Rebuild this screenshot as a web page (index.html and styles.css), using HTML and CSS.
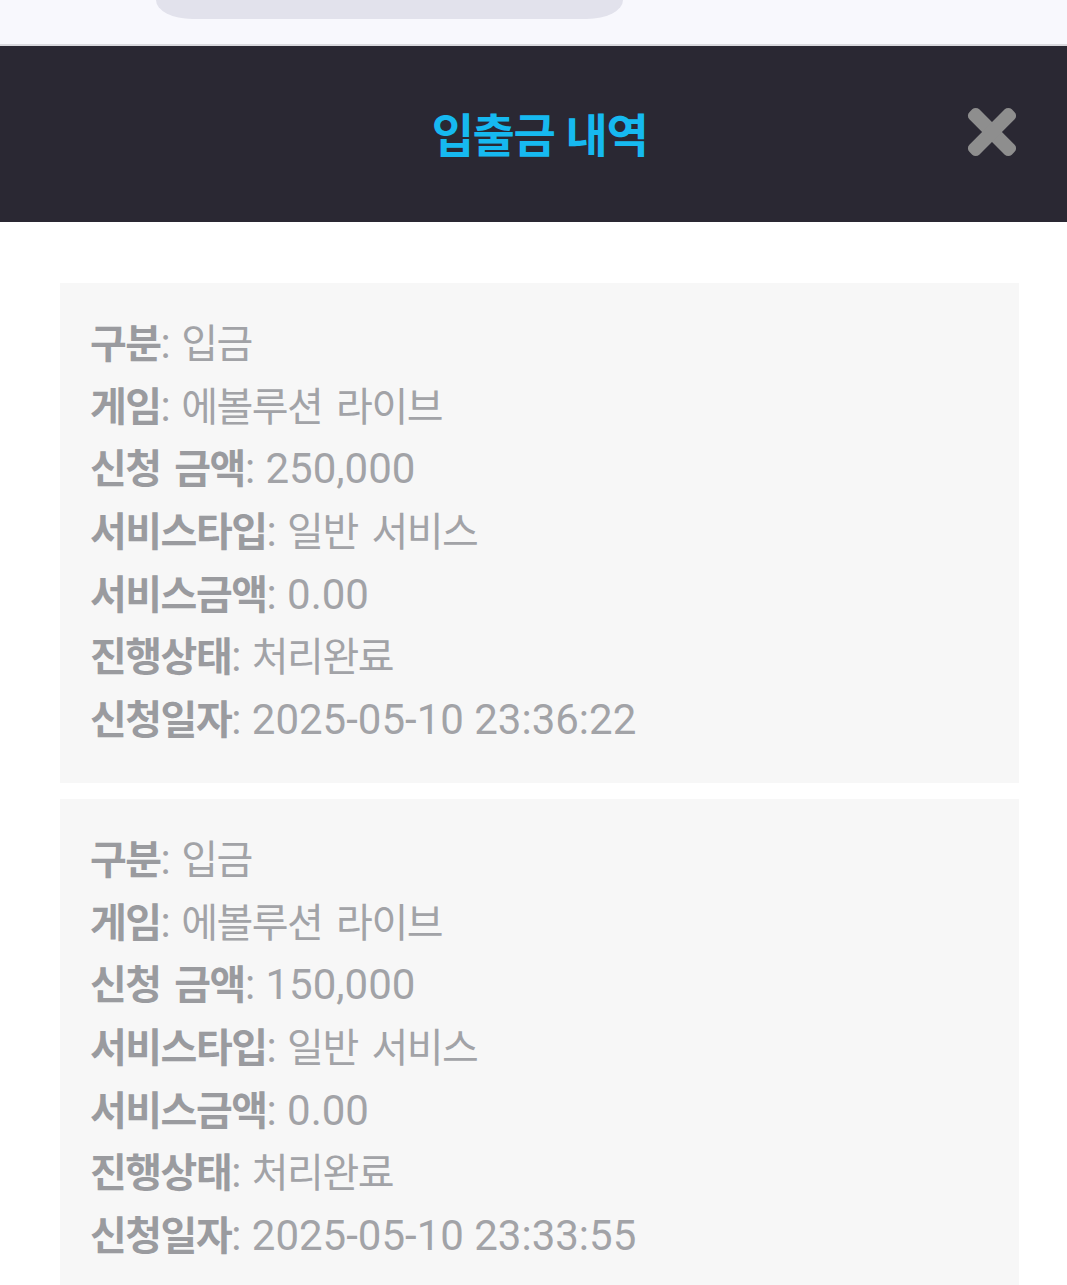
FILE: index.html
```html
<!DOCTYPE html>
<html lang="ko">
<head>
<meta charset="utf-8">
<link rel="stylesheet" href="styles.css">
</head>
<body>
<div class="topbar"><div class="pill"></div></div>
<header class="head">
  <div></div>
  <h1 class="title">입출금 내역</h1>
  <div class="close-wrap">
    <svg class="close" viewBox="0 0 50 50" width="50" height="50">
      <rect x="-5" y="18" width="60" height="14" rx="5" transform="rotate(45 25 25)" fill="#8e8e8e"/>
      <rect x="-5" y="18" width="60" height="14" rx="5" transform="rotate(-45 25 25)" fill="#8e8e8e"/>
    </svg>
  </div>
</header>
<main class="list">
  <section class="card">
    <p class="row"><b class="k">구분</b>: <span class="k">입금</span></p>
    <p class="row"><b class="k">게임</b>: <span class="k">에볼루션 라이브</span></p>
    <p class="row"><b class="k">신청 금액</b>: 250,000</p>
    <p class="row"><b class="k">서비스타입</b>: <span class="k">일반 서비스</span></p>
    <p class="row"><b class="k">서비스금액</b>: 0.00</p>
    <p class="row"><b class="k">진행상태</b>: <span class="k">처리완료</span></p>
    <p class="row"><b class="k">신청일자</b>: 2025-05-10 23:36:22</p>
  </section>
  <section class="card">
    <p class="row"><b class="k">구분</b>: <span class="k">입금</span></p>
    <p class="row"><b class="k">게임</b>: <span class="k">에볼루션 라이브</span></p>
    <p class="row"><b class="k">신청 금액</b>: 150,000</p>
    <p class="row"><b class="k">서비스타입</b>: <span class="k">일반 서비스</span></p>
    <p class="row"><b class="k">서비스금액</b>: 0.00</p>
    <p class="row"><b class="k">진행상태</b>: <span class="k">처리완료</span></p>
    <p class="row"><b class="k">신청일자</b>: 2025-05-10 23:33:55</p>
  </section>
</main>
</body>
</html>
```
FILE: styles.css
```css
html, body {
  margin: 0;
  padding: 0;
  background: #ffffff;
  font-family: Roboto, "Noto Sans CJK KR", sans-serif;
}
.topbar {
  height: 44px;
  background: #f8f8fd;
  border-bottom: 2px solid #d9d9de;
  padding-left: 156px;
}
.pill {
  width: 467px;
  height: 19px;
  background: #e2e2ec;
  border-radius: 0 0 42px 42px / 0 0 22px 22px;
}
.head {
  height: 176px;
  background: #2a2833;
  display: grid;
  grid-template-columns: 1fr auto 1fr;
  align-items: center;
  padding-left: 12px;
}
.title {
  margin: 0;
  color: #16b9f0;
  font-family: "Noto Sans CJK KR", sans-serif;
  font-weight: 700;
  font-size: 46px;
  letter-spacing: -1.5px;
  line-height: 1;
  padding-bottom: 4px;
}
.close-wrap {
  display: flex;
  justify-content: flex-end;
  padding-right: 50px;
}
.close {
  display: block;
  margin-top: -4px;
}
.list {
  padding: 61px 48px 0 60px;
  display: flex;
  flex-direction: column;
  gap: 16px;
}
.card {
  background: #f7f7f7;
  padding: 30px 30px 31px;
}
.row {
  margin: 0;
  font-size: 42px;
  line-height: 62.7px;
  height: 62.7px;
  color: #a2a3a7;
  white-space: nowrap;
}
.row b {
  font-weight: 700;
  color: #9a9b9f;
}
.k {
  font-family: "Noto Sans CJK KR", sans-serif;
  font-size: 40px;
  letter-spacing: -1.5px;
  word-spacing: 4px;
  line-height: 1;
}
```
